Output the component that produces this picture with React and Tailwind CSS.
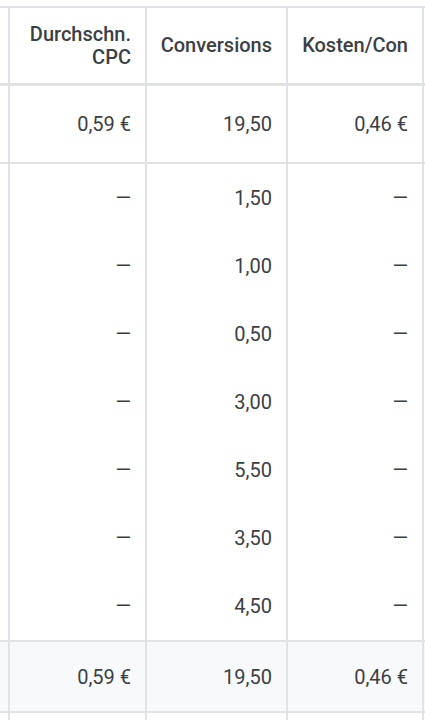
import React from "react";

const rows = ["1,50", "1,00", "0,50", "3,00", "5,50", "3,50", "4,50"];

const Row = ({ cells, className = "", cellClass = "" }) => (
  <div className={`grid grid-cols-[10px_137px_141px_136px_1fr] ${className}`}>
    <div className="border-r-2 border-[#e0e2e6]" />
    {cells.map((c, i) => (
      <div
        key={i}
        className={`flex items-center justify-end pr-[14px] border-r-2 border-[#e0e2e6] ${cellClass}`}
      >
        {c}
      </div>
    ))}
    <div />
  </div>
);

export default function App() {
  return (
    <div
      className="w-[425px] h-[720px] overflow-hidden bg-white text-[#3c4043]"
      style={{ fontFamily: "Roboto, 'Liberation Sans', sans-serif" }}
    >
      <div className="h-[6px]" />
      {/* Header */}
      <Row
        className="h-[80px] border-t-2 border-b-[3px] border-[#e0e2e6]"
        cellClass="text-[20px] leading-[23px] font-medium text-right text-[#3c4043]"
        cells={[
          <span key="a">
            Durchschn.
            <br />
            CPC
          </span>,
          "Conversions",
          "Kosten/Con",
        ]}
      />
      {/* Summary row */}
      <Row
        className="h-[78px] border-b-2 border-[#e0e2e6] text-[20px]"
        cells={["0,59 €", "19,50", "0,46 €"]}
      />
      {/* Detail rows */}
      <div className="border-b-2 border-[#e0e2e6]">
        {rows.map((v, i) => (
          <Row
            key={i}
            className="h-[68px] text-[20px]"
            cells={["—", v, "—"]}
          />
        ))}
      </div>
      {/* Total row */}
      <Row
        className="h-[71px] bg-[#f8f9fa] border-b-2 border-[#e0e2e6] text-[20px]"
        cells={["0,59 €", "19,50", "0,46 €"]}
      />
      <Row className="h-[20px]" cells={["", "", ""]} />
    </div>
  );
}
